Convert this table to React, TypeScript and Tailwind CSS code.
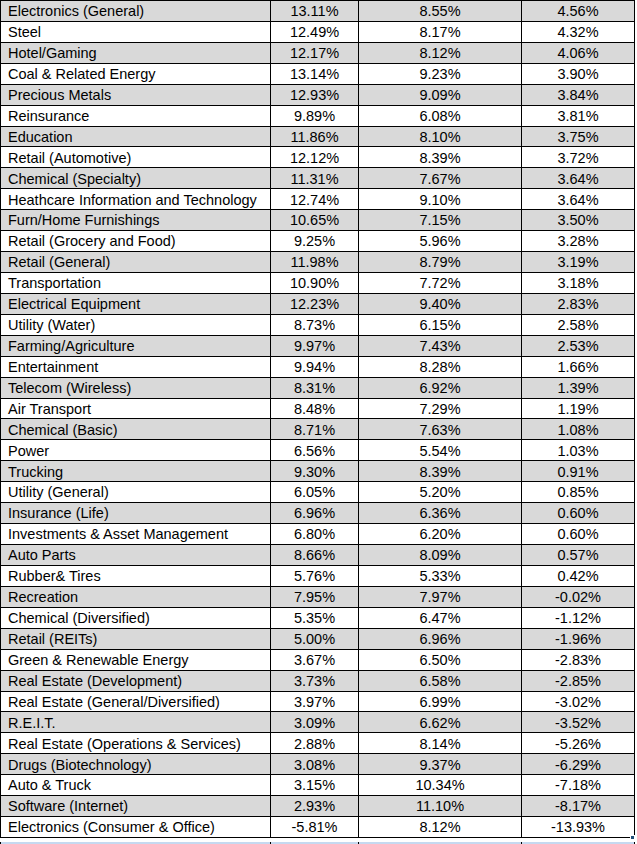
const rows: [string, string, string, string][] = [
  ['Electronics (General)', '13.11%', '8.55%', '4.56%'],
  ['Steel', '12.49%', '8.17%', '4.32%'],
  ['Hotel/Gaming', '12.17%', '8.12%', '4.06%'],
  ['Coal & Related Energy', '13.14%', '9.23%', '3.90%'],
  ['Precious Metals', '12.93%', '9.09%', '3.84%'],
  ['Reinsurance', '9.89%', '6.08%', '3.81%'],
  ['Education', '11.86%', '8.10%', '3.75%'],
  ['Retail (Automotive)', '12.12%', '8.39%', '3.72%'],
  ['Chemical (Specialty)', '11.31%', '7.67%', '3.64%'],
  ['Heathcare Information and Technology', '12.74%', '9.10%', '3.64%'],
  ['Furn/Home Furnishings', '10.65%', '7.15%', '3.50%'],
  ['Retail (Grocery and Food)', '9.25%', '5.96%', '3.28%'],
  ['Retail (General)', '11.98%', '8.79%', '3.19%'],
  ['Transportation', '10.90%', '7.72%', '3.18%'],
  ['Electrical Equipment', '12.23%', '9.40%', '2.83%'],
  ['Utility (Water)', '8.73%', '6.15%', '2.58%'],
  ['Farming/Agriculture', '9.97%', '7.43%', '2.53%'],
  ['Entertainment', '9.94%', '8.28%', '1.66%'],
  ['Telecom (Wireless)', '8.31%', '6.92%', '1.39%'],
  ['Air Transport', '8.48%', '7.29%', '1.19%'],
  ['Chemical (Basic)', '8.71%', '7.63%', '1.08%'],
  ['Power', '6.56%', '5.54%', '1.03%'],
  ['Trucking', '9.30%', '8.39%', '0.91%'],
  ['Utility (General)', '6.05%', '5.20%', '0.85%'],
  ['Insurance (Life)', '6.96%', '6.36%', '0.60%'],
  ['Investments & Asset Management', '6.80%', '6.20%', '0.60%'],
  ['Auto Parts', '8.66%', '8.09%', '0.57%'],
  ['Rubber& Tires', '5.76%', '5.33%', '0.42%'],
  ['Recreation', '7.95%', '7.97%', '-0.02%'],
  ['Chemical (Diversified)', '5.35%', '6.47%', '-1.12%'],
  ['Retail (REITs)', '5.00%', '6.96%', '-1.96%'],
  ['Green & Renewable Energy', '3.67%', '6.50%', '-2.83%'],
  ['Real Estate (Development)', '3.73%', '6.58%', '-2.85%'],
  ['Real Estate (General/Diversified)', '3.97%', '6.99%', '-3.02%'],
  ['R.E.I.T.', '3.09%', '6.62%', '-3.52%'],
  ['Real Estate (Operations & Services)', '2.88%', '8.14%', '-5.26%'],
  ['Drugs (Biotechnology)', '3.08%', '9.37%', '-6.29%'],
  ['Auto & Truck', '3.15%', '10.34%', '-7.18%'],
  ['Software (Internet)', '2.93%', '11.10%', '-8.17%'],
  ['Electronics (Consumer & Office)', '-5.81%', '8.12%', '-13.93%'],
]

export default function App() {
  return (
    <div className="relative w-[637px] h-[844px] bg-white overflow-hidden text-black text-[14.5px] font-['Liberation_Sans',Arial,sans-serif]">
      {/* sheet */}
      <div className="grid w-[635px] h-[838px] grid-cols-[269px_87px_162px_112px] grid-rows-[repeat(40,minmax(0,1fr))] gap-px p-px bg-black">
        {rows.map((r, i) => {
          const bg = i % 2 === 0 ? 'bg-[#d9d9d9]' : 'bg-white'
          return [
            <div key={i + 'a'} className={`${bg} flex items-center pl-[7px] pt-px whitespace-nowrap leading-none`}>{r[0]}</div>,
            <div key={i + 'b'} className={`${bg} flex items-center justify-center pt-px leading-none`}>{r[1]}</div>,
            <div key={i + 'c'} className={`${bg} flex items-center justify-center pt-px leading-none`}>{r[2]}</div>,
            <div key={i + 'd'} className={`${bg} flex items-center justify-center pt-px leading-none`}>{r[3]}</div>,
          ]
        })}
      </div>

      {/* next row peeking in, selected */}
      <div className="grid w-[635px] h-[2px] mt-[4px] grid-cols-[269px_87px_162px_112px] gap-x-px px-px bg-black">
        <div className="bg-[#c6d9f0]"></div>
        <div className="bg-[#c6d9f0]"></div>
        <div className="bg-[#c6d9f0]"></div>
        <div className="bg-[#c6d9f0]"></div>
      </div>

      {/* fill handle */}
      <div className="absolute left-[630px] top-[835px] w-[5px] h-[5px] bg-[#1f4e79] border border-white"></div>
    </div>
  )
}
